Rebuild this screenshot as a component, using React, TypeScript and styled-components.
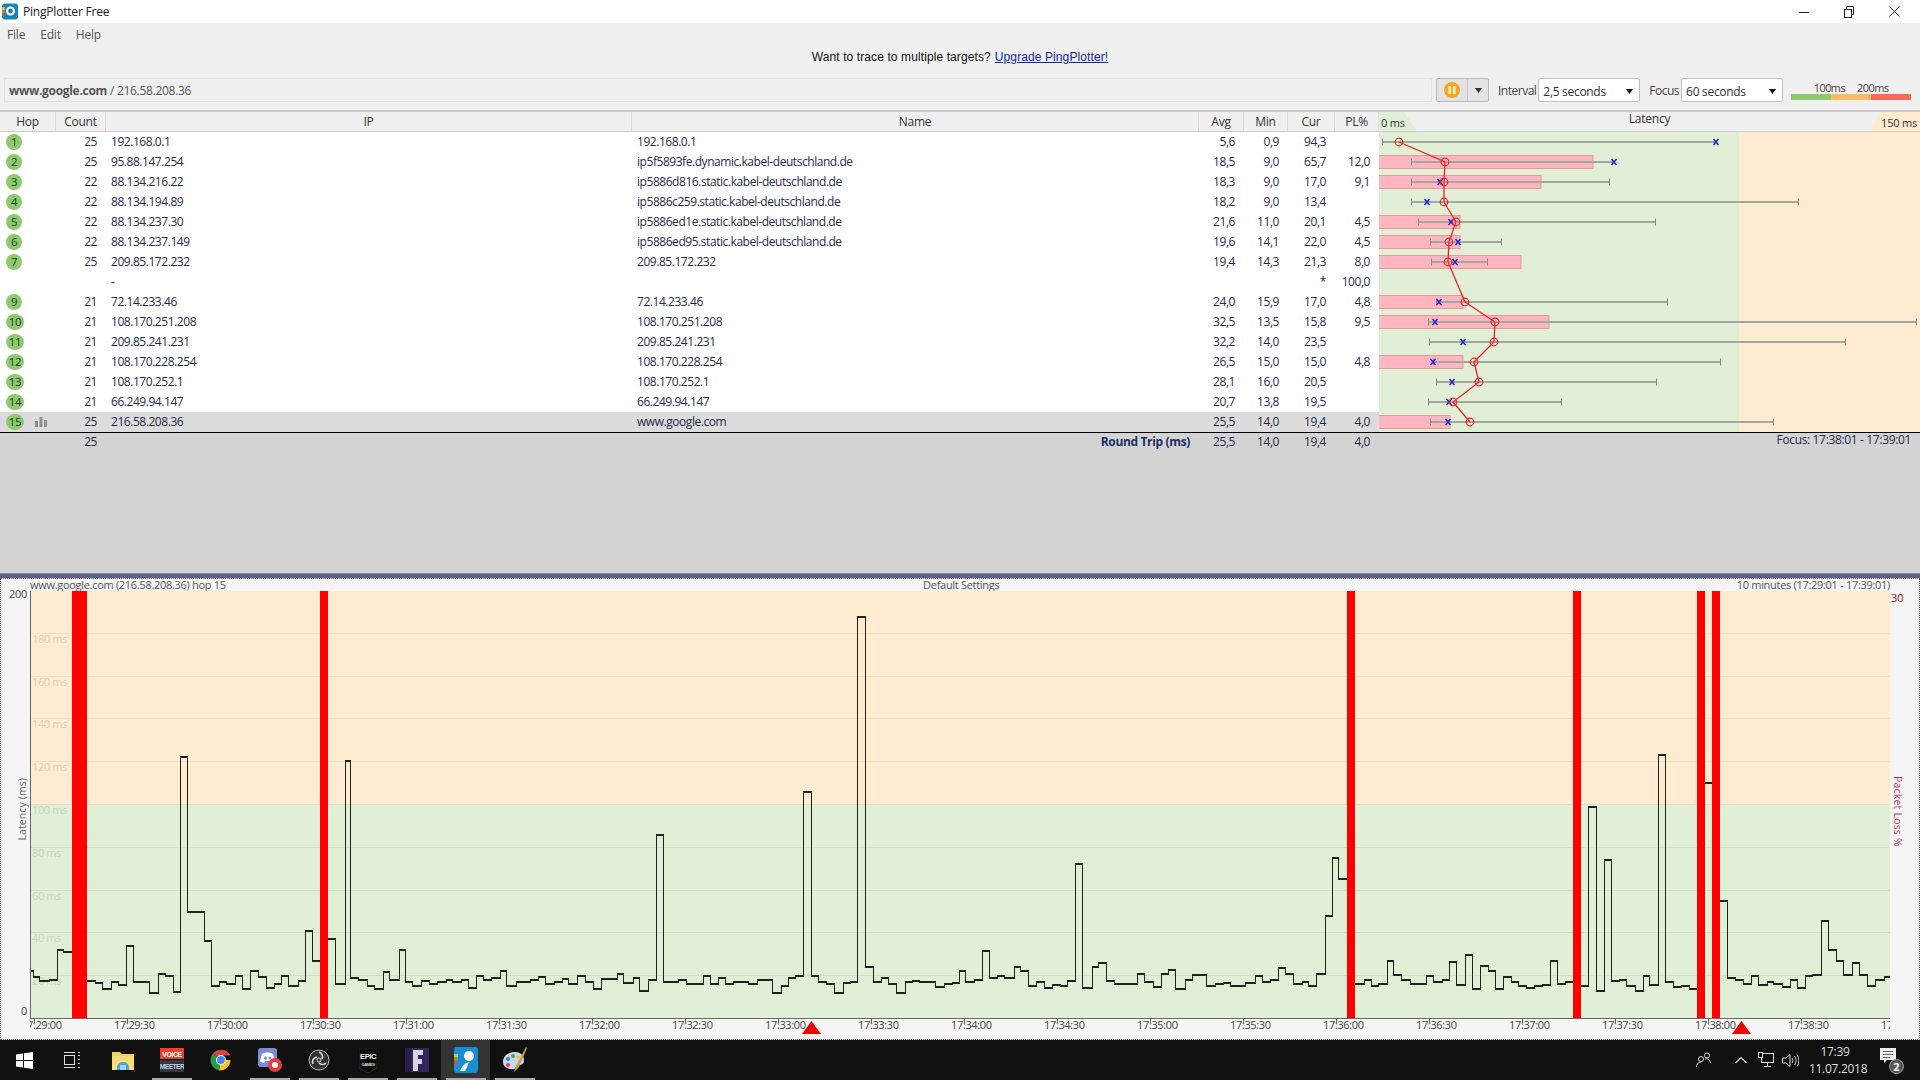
import React from 'react';
import styled, { createGlobalStyle } from 'styled-components';

const Global = createGlobalStyle`
  html, body { margin: 0; padding: 0; background: #fff; overflow: hidden; }
  * { box-sizing: border-box; }
`;

const Shell = styled.div`
  width: 1920px; height: 1080px; display: flex; flex-direction: column;
  font-family: "Open Sans", "Noto Sans", sans-serif; font-size: 12px; letter-spacing: -0.45px;
  color: #1f2a4a; background: #f0f0f0; overflow: hidden;
`;
const TitleBar = styled.div`
  height: 23px; background: #fff; display: flex; align-items: center; padding-left: 1px; color: #222; flex: none;
`;
const AppName = styled.span`margin-left: 4px; font-size: 12px; letter-spacing: -0.2px;`;
const WinButtons = styled.div`margin-left: auto; display: flex; align-items: center; gap: 35px; padding-right: 20px;`;
const MenuBar = styled.div`
  height: 24px; display: flex; align-items: center; gap: 15px; padding: 0 0 2px 7px; color: #555; flex: none; letter-spacing: -0.2px;
`;
const Banner = styled.div`
  height: 20px; flex: none; display: flex; justify-content: center; align-items: center; gap: 4px;
  font-family: "Liberation Sans", Arial, sans-serif; letter-spacing: 0.1px; color: #111;
  a { color: #0a1fb0; text-decoration: underline; }
`;
const ControlBar = styled.div`
  height: 43px; flex: none; display: flex; align-items: center; padding: 3px 0 0 4px;
`;
const AddressBox = styled.div`
  width: 1428px; height: 24px; border: 1px solid #e2e2e2; padding-left: 4px; display: flex; align-items: center; gap: 3px; color: #555; letter-spacing: -0.3px;
  b { font-weight: 700; }
`;
const PauseGroup = styled.div`
  margin-left: 4px; width: 53px; height: 24px; display: flex; border: 1px solid #b8b8b8; border-radius: 2px; background: #e3e3e3;
`;
const PauseHalf = styled.div`
  width: 31px; display: flex; align-items: center; justify-content: center; border-right: 1px solid #c4c4c4;
`;
const ArrowHalf = styled.div`flex: 1; display: flex; align-items: center; justify-content: center;`;
const FieldLabel = styled.span`color: #444; letter-spacing: -0.5px; margin: 0 2px 0 9px;`;
const Select = styled.div`
  width: 102px; height: 24px; background: #fff; border: 1px solid #c0c0c0; border-radius: 2px; display: flex; align-items: center;
  justify-content: space-between; padding: 2px 6px 0 4px; color: #333; letter-spacing: -0.3px;
`;
const Legend = styled.div`margin-left: 8px; width: 120px; display: flex; flex-direction: column; margin-top: 1px;`;
const LegendLabels = styled.div`display: flex; justify-content: center; gap: 12px; font-size: 11px; line-height: 13px; color: #444; letter-spacing: -0.6px;`;
const LegendBar = styled.div`display: flex; height: 6px;`;
const LegendPart = styled.div<{ $c: string }>`flex: 1; background: ${p => p.$c};`;

const HeadWrap = styled.div`
  height: 22px; flex: none; display: flex; border-top: 2px solid #cccccc; border-bottom: 1px solid #cccccc; background: #f0f0f0;
`;
const COLS = '56px 50px 526px 567px 45px 44px 47px 44px';
const HeadGrid = styled.div`display: grid; grid-template-columns: ${COLS}; width: 1379px; flex: none;`;
const HeadCell = styled.div`
  display: flex; align-items: center; justify-content: center; border-right: 1px solid #dcdcdc; color: #333; letter-spacing: -0.25px; padding-bottom: 1px;
`;
const LatencyHead = styled.div`
  flex: 1; position: relative; display: flex; justify-content: space-between; align-items: flex-end; padding: 0 3px 0 2px;
  background: linear-gradient(90deg, #e0efd6 50%, #feebd0 50%); color: #333; font-size: 11px; line-height: 16px; letter-spacing: -0.2px;
  &::before { content: ''; position: absolute; inset: 0; background: #f0f0f0;
    clip-path: polygon(25px 0, calc(100% - 40px) 0, calc(100% - 50px) 100%, 38px 100%); }
`;
const LatencyTitle = styled.span`
  position: absolute; left: 0; right: 0; top: -1px; text-align: center; font-size: 12px; color: #333; letter-spacing: -0.2px;
`;
const HeadEnd = styled.span`position: relative;`;

const TableBody = styled.div`display: flex; flex: none; height: 300px; background: #fff;`;
const RowsCol = styled.div`width: 1379px; flex: none;`;
const Row = styled.div<{ $sel?: boolean }>`
  display: grid; grid-template-columns: ${COLS}; height: 20px; align-items: center; background: ${p => (p.$sel ? '#dcdcdc' : 'transparent')};
`;
const HopCell = styled.div`display: flex; align-items: center; padding-left: 6px; gap: 11px;`;
const Badge = styled.div<{ $wide: boolean }>`
  width: ${p => (p.$wide ? 18 : 16)}px; height: 16px; border-radius: 50%; background: #8ec96f; color: #24402a; display: flex; align-items: center; justify-content: center;
  font-size: 11.5px; line-height: 16px; padding-bottom: 1px;
`;
const Num = styled.div`text-align: right; padding: 0 9px 2px 0;`;
const Txt = styled.div`padding: 0 0 2px 5px; white-space: nowrap;`;
const BoldNum = styled(Num)`font-weight: 700; color: #1b2f63; letter-spacing: -0.35px;`;
const LatencySvg = styled.svg`display: block; width: 541px; height: 300px; flex: none;`;

const Grey = styled.div`
  height: 141px; flex: none; background: #d3d3d3; border-top: 1px solid #000; display: flex; align-items: flex-start;
`;
const SummaryRow = styled(Row)`width: 1379px; height: 14px; flex: none;`;
const FocusText = styled.div`margin-left: auto; padding-right: 9px; line-height: 14px; letter-spacing: -0.35px;`;
const Splitter = styled.div`height: 5px; flex: none; background: #60608a; border-top: 1px solid #8a8aa4;`;

const GraphPanel = styled.div`
  height: 462px; flex: none; background: #f5f5f5; border: 1px dotted #555; border-bottom: 1px dotted #444; display: flex; flex-direction: column;
`;
const GraphTitle = styled.div`
  height: 12px; flex: none; margin: 0 29px; padding-bottom: 2px; display: flex; justify-content: space-between; align-items: center; font-size: 11px; color: #555; letter-spacing: -0.3px;
`;
const GraphMid = styled.span`margin-right: 40px;`;
const GraphBody = styled.div`display: flex; flex: none; height: 447px;`;
const AxisLeft = styled.div`
  width: 29px; height: 427px; flex: none; display: flex; flex-direction: column; justify-content: space-between; align-items: flex-end; padding-right: 3px; color: #444; font-size: 11px; letter-spacing: -0.3px; line-height: 14px;
`;
const TopNum = styled.span`margin-top: -4px;`;
const BottomNum = styled.span`margin-bottom: 0;`;
const VertLabel = styled.span`
  writing-mode: vertical-rl; transform: rotate(180deg); font-size: 10.5px; color: #666; letter-spacing: 0.1px; margin-right: -2px; margin-top: 14px;
`;
const ChartSvg = styled.svg`display: block; width: 1860px; height: 447px; flex: none;`;
const AxisRight = styled.div`
  width: 29px; height: 427px; flex: none; display: flex; flex-direction: column; padding-left: 1px; color: #a01020; font-size: 11px; line-height: 14px; letter-spacing: -0.1px;
`;
const PacketLabel = styled.span`
  align-self: flex-start; writing-mode: vertical-rl; font-size: 10.5px; color: #c03a58; letter-spacing: 0.2px; margin-top: 171px;
`;

const Taskbar = styled.div`height: 40px; flex: none; background: #101010; display: flex; align-items: stretch; color: #eee;`;
const Slot = styled.div<{ $w?: number; $run?: boolean; $active?: boolean }>`
  width: ${p => p.$w ?? 49}px; position: relative; display: flex; align-items: center; justify-content: center;
  background: ${p => (p.$active ? '#333' : 'transparent')};
  ${p => p.$run ? `&::after { content: ''; position: absolute; left: 5px; right: 4px; bottom: 0; height: 2px; background: #a9a9a9; }` : ''}
`;
const Spacer = styled.div`width: 2px;`;
const Tray = styled.div`margin-left: auto; display: flex; align-items: center; padding-right: 17px;`;
const TrayIcon = styled.div<{ $mr: number }>`display: flex; margin-right: ${p => p.$mr}px;`;
const Clock = styled.div`
  width: 52px; margin-right: 19px; text-align: center; font-size: 12px; line-height: 17px; letter-spacing: -0.3px; color: #ddd;
`;
const NotifyWrap = styled.div`position: relative; width: 23px; height: 24px;`;
const NotifyCount = styled.span`
  position: absolute; right: -1px; bottom: -2px; width: 15px; height: 15px; border-radius: 50%; background: #555; border: 1px solid #999; color: #fff;
  font-size: 11px; font-weight: 700; line-height: 13px; text-align: center; letter-spacing: 0;
`;

interface Hop { hop: string; count: string; ip: string; name: string; avg: string; min: string; cur: string; pl: string }
const H = (hop: string, count: string, ip: string, name: string, avg: string, min: string, cur: string, pl: string): Hop => ({ hop, count, ip, name, avg, min, cur, pl });
const hops: Hop[] = [
  H('1', '25', '192.168.0.1', '192.168.0.1', '5,6', '0,9', '94,3', ''),
  H('2', '25', '95.88.147.254', 'ip5f5893fe.dynamic.kabel-deutschland.de', '18,5', '9,0', '65,7', '12,0'),
  H('3', '22', '88.134.216.22', 'ip5886d816.static.kabel-deutschland.de', '18,3', '9,0', '17,0', '9,1'),
  H('4', '22', '88.134.194.89', 'ip5886c259.static.kabel-deutschland.de', '18,2', '9,0', '13,4', ''),
  H('5', '22', '88.134.237.30', 'ip5886ed1e.static.kabel-deutschland.de', '21,6', '11,0', '20,1', '4,5'),
  H('6', '22', '88.134.237.149', 'ip5886ed95.static.kabel-deutschland.de', '19,6', '14,1', '22,0', '4,5'),
  H('7', '25', '209.85.172.232', '209.85.172.232', '19,4', '14,3', '21,3', '8,0'),
  H('', '', '-', '', '', '', '*', '100,0'),
  H('9', '21', '72.14.233.46', '72.14.233.46', '24,0', '15,9', '17,0', '4,8'),
  H('10', '21', '108.170.251.208', '108.170.251.208', '32,5', '13,5', '15,8', '9,5'),
  H('11', '21', '209.85.241.231', '209.85.241.231', '32,2', '14,0', '23,5', ''),
  H('12', '21', '108.170.228.254', '108.170.228.254', '26,5', '15,0', '15,0', '4,8'),
  H('13', '21', '108.170.252.1', '108.170.252.1', '28,1', '16,0', '20,5', ''),
  H('14', '21', '66.249.94.147', '66.249.94.147', '20,7', '13,8', '19,5', ''),
  H('15', '25', '216.58.208.36', 'www.google.com', '25,5', '14,0', '19,4', '4,0'),
];

// row, min, avg, cur, max, bar end (absolute screen x)
const lat: [number, number, number, number, number, number][] = [
  [0, 1382, 1399, 1716, 1716, 0],
  [1, 1411, 1445, 1614, 1614, 1593],
  [2, 1411, 1444, 1440, 1609, 1541],
  [3, 1411, 1444, 1427, 1798, 0],
  [4, 1418, 1456, 1451, 1655, 1460],
  [5, 1430, 1449, 1458, 1501, 1460],
  [6, 1431, 1448, 1455, 1487, 1521],
  [8, 1436, 1465, 1439, 1667, 1463],
  [9, 1428, 1495, 1435, 1916, 1549],
  [10, 1429, 1494, 1463, 1845, 0],
  [11, 1433, 1474, 1433, 1720, 1463],
  [12, 1436, 1479, 1452, 1656, 0],
  [13, 1428, 1453, 1449, 1561, 0],
  [14, 1430, 1470, 1448, 1773, 1450],
];

const LatencyChart = () => {
  const pts = lat.map(r => `${r[2]},${10 + r[0] * 20}`).join(' ');
  return (
    <LatencySvg viewBox="1379 0 541 300">
      <rect x="1379" y="0" width="360" height="300" fill="#e0efd6" />
      <rect x="1739" y="0" width="181" height="300" fill="#feebd0" />
      {lat.map(([i, , , , , bar]) => bar > 0 && (
        <rect key={i} x="1378.5" y={3.5 + i * 20} width={bar - 1378.5} height="13" fill="#ffb6c1" stroke="#e89a90" />
      ))}
      {lat.map(([i, min, , cur, max]) => {
        const y = 10 + i * 20;
        return (
          <g key={i} stroke="#a3a89e">
            <line x1={min} x2={max} y1={y} y2={y} strokeWidth="2" />
            <line x1={min + 0.5} x2={min + 0.5} y1={y - 3.5} y2={y + 3.5} stroke="#8a8a8a" />
            {cur !== max && <line x1={max + 0.5} x2={max + 0.5} y1={y - 3.5} y2={y + 3.5} stroke="#8a8a8a" />}
          </g>
        );
      })}
      <polyline points={pts} fill="none" stroke="#e8262a" strokeWidth="1.3" />
      {lat.map(([i, , , cur]) => {
        const y = 10 + i * 20;
        return <path key={i} d={`M${cur - 2.5} ${y - 3}L${cur + 2.5} ${y + 3}M${cur + 2.5} ${y - 3}L${cur - 2.5} ${y + 3}`} stroke="#2222cc" strokeWidth="1.5" fill="none" />;
      })}
      {lat.map(([i, , avg]) => (
        <circle key={i} cx={avg} cy={10 + i * 20} r="3.8" fill="none" stroke="#e8262a" strokeWidth="1.2" />
      ))}
    </LatencySvg>
  );
};

const seg10 = [[68,815],[73,833],[88,845],[110,842],[127,752],[142,759],[192,845],[212,853],[229,870],[248,848],[264,857],[283,740],[299,849],[333,881],[353,824],[369,830],[387,878],[404,173],[420,638],[456,725],[472,860],[491,848],[507,855],[527,830],[541,870],[561,815],[577,835],[595,866],[614,854],[630,830],[646,860],[667,845],[684,695],[698,785],[732,719],[751,855],[772,185],[785,836],[803,842],[821,860],[838,870],[857,818],[872,843],[893,752],[908,848],[924,860],[944,845],[960,855],[980,848],[998,842],[1013,848],[1032,842],[1048,867],[1067,830],[1081,843],[1100,836],[1120,815],[1134,860],[1155,848],[1188,842],[1206,833],[1221,855],[1241,848],[1258,840],[1273,855],[1292,830],[1310,850],[1328,870],[1347,840],[1381,824],[1396,852],[1417,836],[1432,875],[1451,842],[1468,407],[1484,848]];
const seg11 = [[0,1176],[17,1142],[35,707],[51,1149],[85,1142],[102,1154],[140,1130],[156,1155],[175,1136],[190,1154],[209,1149],[243,1154],[261,1142],[295,1182],[315,1161],[331,1136],[348,1130],[366,578],[382,1130],[398,1149],[416,1154],[434,1182],[454,1151],[471,1148],[487,53],[503,1103],[521,1149],[540,1136],[555,1154],[573,1182],[593,1149],[609,1145],[626,1149],[660,1164],[680,1154],[698,1151],[714,1115],[729,1149],[748,1142],[767,1055],[781,1136],[800,1130],[816,1136],[837,1103],[852,1115],[868,1161],[887,1149],[904,1167],[923,1157],[940,1161],[957,1145],[975,794],[991,1167],[1012,1103],[1027,1092],[1043,1146],[1061,1154],[1114,1124],[1130,1149],[1148,1164],[1168,1124],[1183,1112],[1199,1170],[1220,1142],[1237,1128],[1268,1161],[1289,1155],[1306,1151],[1322,1161]];
const seg12 = [[12,852],[34,830],[50,849],[69,843],[87,808],[104,825],[122,855],[142,849],[156,861],[176,824],[195,650],[213,477],[227,540],[262,855],[285,842],[301,861],[319,855],[338,785],[353,827],[372,842],[391,855],[429,830],[444,849],[465,842],[483,790],[497,858],[518,767],[534,870],[554,800],[571,815],[587,870],[606,835],[624,848],[642,860],[659,866],[679,860],[697,857],[716,785],[730,855],[750,848],[783,860],[803,323],[820,876],[840,482],[856,845],[875,842],[891,860],[910,876],[930,832],[944,857],[965,167],[981,848],[999,865],[1018,860],[1035,870],[1069,252],[1103,605],[1124,836],[1142,842],[1160,855],[1179,830],[1195,858],[1216,848],[1230,856],[1249,864],[1269,842],[1284,868],[1304,830],[1320,827],[1340,667],[1357,752],[1374,785],[1391,828],[1411,793],[1428,828],[1445,860],[1465,843],[1484,833]];

const trace: [number, number][] = [
  ...seg10.map(([p, q]) => [Math.round(p / 2.24), Math.round(700 + q / 3)] as [number, number]).filter(a => a[0] < 640),
  ...seg11.map(([p, q]) => [Math.round(640 + p / 2.24), Math.round(600 + q / 3)] as [number, number]).filter(a => a[0] >= 640),
  ...seg12.map(([p, q]) => [Math.round(1240 + p / 2.306), Math.round(700 + q / 3)] as [number, number]),
];
const END = 1890;
const horiz = trace.map(([x, y], i) => `M${x} ${y}H${i + 1 < trace.length ? trace[i + 1][0] + 1 : END}`).join('');
const vert = trace.slice(1).map(([x, y], i) => `M${x + 0.5} ${trace[i][1]}V${y}`).join('');

const gridYs = [634, 677, 719, 762, 848, 891, 933, 976];
const axisLabels: [string, number][] = [['180 ms', 634], ['160 ms', 677], ['140 ms', 719], ['120 ms', 762], ['100 ms', 805], ['80 ms', 848], ['60 ms', 891], ['40 ms', 933], ['20 ms', 976]];
const redBars: [number, number][] = [[72, 15], [320, 8], [1347, 8], [1573, 8], [1697, 8], [1712, 8]];
const ticks = Array.from({ length: 21 }, (_, k) => {
  const total = 29 * 60 + k * 30;
  const m = Math.floor(total / 60);
  return { x: 34 + 93 * k, label: `17:${m}:${total % 60 === 0 ? '00' : '30'}` };
});

const TraceChart = () => (
  <ChartSvg viewBox="30 592 1860 447">
    <rect x="30" y="592" width="1860" height="213" fill="#feebd0" />
    <rect x="30" y="805" width="1860" height="214" fill="#e0efd6" />
    {gridYs.map(y => (
      <line key={y} x1="30" x2="1890" y1={y + 0.5} y2={y + 0.5} stroke={y < 805 ? '#f1e0c6' : '#d0e0c6'} />
    ))}
    <line x1="30" x2="1890" y1="805.5" y2="805.5" stroke="#e6dfc8" />
    {axisLabels.map(([t, y]) => (
      <text key={t} x="32" y={y + 10} fontSize="11" letterSpacing="-0.4" fontFamily="Open Sans" fill={y < 805 ? '#dccfb7' : '#c7d5bc'}>{t}</text>
    ))}
    <path d={horiz} stroke="#1b231a" strokeWidth="2" fill="none" />
    <path d={vert} stroke="#1b231a" strokeWidth="1" fill="none" />
    {redBars.map(([x, w]) => <rect key={x} x={x} y="592" width={w} height="427" fill="#ff0000" />)}
    <line x1="30" x2="1890" y1="1019.5" y2="1019.5" stroke="#666" />
    <line x1="30.5" x2="30.5" y1="592" y2="1020" stroke="#666" />
    {ticks.map(t => (
      <g key={t.x}>
        <line x1={t.x + 0.5} x2={t.x + 0.5} y1="1019" y2="1024" stroke="#666" />
        <text x={t.x - 13} y="1030" fontSize="11" letterSpacing="-0.35" fontFamily="Open Sans" fill="#444">{t.label}</text>
      </g>
    ))}
    <polygon points="802,1035 821,1035 811.5,1022" fill="#ee0000" />
    <polygon points="1732,1035 1751,1035 1741.5,1022" fill="#ee0000" />
  </ChartSvg>
);

const Caret = ({ c = '#333' }: { c?: string }) => (
  <svg width="7" height="5" viewBox="0 0 7 5"><polygon points="0,0 7,0 3.5,5" fill={c} /></svg>
);

const AppLogo = () => (
  <svg width="18" height="17" viewBox="0 0 18 17">
    <rect x="1" y="0.5" width="16" height="16" rx="3" fill="#1582c4" />
    <rect x="1" y="4" width="3" height="3" fill="#f0b030" />
    <rect x="1" y="7" width="3" height="3" fill="#5fb04a" />
    <rect x="1" y="10" width="3" height="3" fill="#e0483c" />
    <circle cx="9.5" cy="8" r="4.5" fill="#fff" />
    <circle cx="9.5" cy="8" r="2.4" fill="#1582c4" />
  </svg>
);

const TaskIcons = {
  Win: () => (
    <svg width="17" height="17" viewBox="0 0 17 17"><path d="M0 2.5 7 1.4V8H0zM8 1.2 17 0V8H8zM0 9H7V15.6L0 14.5zM8 9H17V17L8 15.8z" fill="#fff" /></svg>
  ),
  View: () => (
    <svg width="16" height="16" viewBox="0 0 16 16" fill="none" stroke="#ddd"><path d="M0 .5H11M0 15.5H11" /><rect x=".5" y="3.5" width="10" height="9" /><path d="M14 .5h2M14 3.5h2M14 7.5h2M14 11.5h2M14 15.5h2" /></svg>
  ),
  Folder: () => (
    <svg width="22" height="20" viewBox="0 0 22 20"><path d="M0 2h8l2 2h12v16H0z" fill="#f6cf62" /><path d="M0 6h22v14H0z" fill="#fbdc7d" /><path d="M5 17a6 5 0 0 1 12 0v3H5z" fill="#4aa6d8" /><rect x="8" y="15" width="6" height="5" fill="#9ed2ee" /></svg>
  ),
  Voice: () => (
    <svg width="24" height="24" viewBox="0 0 24 24">
      <rect y="0" width="24" height="11" fill="#e8432e" /><rect y="12" width="24" height="12" fill="#2e3a4c" />
      <text x="12" y="8.5" textAnchor="middle" fontSize="7" fontWeight="700" fontFamily="Liberation Sans" fill="#fff">VOICE</text>
      <text x="12" y="20.5" textAnchor="middle" fontSize="6.5" fontWeight="700" fontFamily="Liberation Sans" fill="#c8d0d8">MEETER</text>
    </svg>
  ),
  Chrome: () => (
    <svg width="22" height="22" viewBox="0 0 22 22">
      <path d="M11 11 3 4.5A10.5 10.5 0 0 1 20.5 6.5H11z" fill="#dd4437" />
      <path d="M11 11h9.5A10.5 10.5 0 0 1 9 21.4z" fill="#f8c51c" />
      <path d="M11 11 9 21.4A10.5 10.5 0 0 1 3 4.5z" fill="#2a9a47" />
      <circle cx="11" cy="11" r="5" fill="#fff" /><circle cx="11" cy="11" r="3.9" fill="#4286f4" />
    </svg>
  ),
  Discord: () => (
    <svg width="24" height="24" viewBox="0 0 24 24">
      <rect x="0" y="0" width="19" height="19" rx="3" fill="#7a8cd8" />
      <path d="M4 6c3-2 8-2 11 0l2 7c-2 1.6-3 2-4 2l-1-2H7l-1 2c-1 0-2-.4-4-2z" fill="#fff" />
      <circle cx="7.5" cy="10" r="1.5" fill="#7a8cd8" /><circle cx="12" cy="10" r="1.5" fill="#7a8cd8" />
      <circle cx="17" cy="17" r="7" fill="#e83a44" /><circle cx="17" cy="17" r="3" fill="#fff" />
    </svg>
  ),
  Obs: () => (
    <svg width="22" height="22" viewBox="0 0 22 22" fill="none">
      <circle cx="11" cy="11" r="10" fill="#333" stroke="#bbb" strokeWidth="1" />
      <path d="M11 3a5 5 0 0 1 3 7M18 14a5 5 0 0 1-7 0M5 15a5 5 0 0 1 4-7" stroke="#ddd" strokeWidth="1.6" />
      <circle cx="11" cy="11" r="2" stroke="#ddd" />
    </svg>
  ),
  Epic: () => (
    <svg width="18" height="25" viewBox="0 0 18 25">
      <path d="M0 0H18V20L9 25 0 20z" fill="#0a0a0a" stroke="#2a2a2a" />
      <text x="9" y="11" textAnchor="middle" fontSize="7.5" fontWeight="700" fontFamily="Liberation Sans" fill="#eee" letterSpacing="-0.4">EPIC</text>
      <text x="9" y="18" textAnchor="middle" fontSize="4.2" fontWeight="700" fontFamily="Liberation Sans" fill="#ddd">GAMES</text>
    </svg>
  ),
  Fort: () => (
    <svg width="24" height="24" viewBox="0 0 24 24">
      <rect width="24" height="24" fill="#35245c" /><path d="M0 0h6v24H0z" fill="#2a1c4a" /><path d="M8 2h10v5h-5v4h4v5h-4v7H8z" fill="#d8d4e4" />
    </svg>
  ),
  Pp: () => (
    <svg width="24" height="26" viewBox="0 0 24 26">
      <rect width="24" height="26" rx="3" fill="#1590d8" />
      <rect y="7" width="4" height="3.5" fill="#f0b030" /><rect y="10.5" width="4" height="3.5" fill="#5fb04a" /><rect y="14" width="4" height="3.5" fill="#e0483c" />
      <circle cx="15" cy="9" r="5" fill="#fff" /><path d="M6 24c2-5 5-8 9-9l-2 5-2 4z" fill="#fff" />
    </svg>
  ),
  Paint: () => (
    <svg width="24" height="26" viewBox="0 0 24 26">
      <path d="M12 5C5 5 0 9 0 15c0 6 7 8 11 7 3-1 1-4 4-4 4 0 6-1 6-5 0-5-4-8-9-8z" fill="#c8d8e8" />
      <circle cx="5" cy="12" r="2" fill="#3a7ad0" /><circle cx="10" cy="9" r="2" fill="#40a850" /><circle cx="5" cy="18" r="2" fill="#e04040" /><circle cx="15" cy="10" r="1.6" fill="#f0c030" />
      <path d="M23 0 13 19l-2 6 5-5L24 1z" fill="#d89a40" />
    </svg>
  ),
};

export default function App() {
  return (
    <Shell>
      <Global />
      <TitleBar>
        <AppLogo />
        <AppName>PingPlotter Free</AppName>
        <WinButtons>
          <svg width="10" height="10" viewBox="0 0 10 10"><path d="M0 5.5H10" stroke="#222" /></svg>
          <svg width="10" height="12" viewBox="0 0 10 12" fill="none" stroke="#222"><rect x=".5" y="3.5" width="7" height="8" /><path d="M2.5 3.5V.5H9.5V8.5H7.5" /></svg>
          <svg width="11" height="11" viewBox="0 0 11 11"><path d="M.5.5 10.5 10.5M10.5.5 .5 10.5" stroke="#222" /></svg>
        </WinButtons>
      </TitleBar>
      <MenuBar><span>File</span><span>Edit</span><span>Help</span></MenuBar>
      <Banner>Want to trace to multiple targets? <a href="#upgrade">Upgrade PingPlotter!</a></Banner>
      <ControlBar>
        <AddressBox><b>www.google.com</b><span>/ 216.58.208.36</span></AddressBox>
        <PauseGroup>
          <PauseHalf>
            <svg width="16" height="16" viewBox="0 0 16 16"><circle cx="8" cy="8" r="8" fill="#f7a623" /><rect x="4.5" y="4" width="2.6" height="8" fill="#fdeec4" /><rect x="8.9" y="4" width="2.6" height="8" fill="#fdeec4" /></svg>
          </PauseHalf>
          <ArrowHalf><Caret /></ArrowHalf>
        </PauseGroup>
        <FieldLabel>Interval</FieldLabel>
        <Select>2,5 seconds<Caret c="#111" /></Select>
        <FieldLabel>Focus</FieldLabel>
        <Select>60 seconds<Caret c="#111" /></Select>
        <Legend>
          <LegendLabels><span>100ms</span><span>200ms</span></LegendLabels>
          <LegendBar><LegendPart $c="#8fc86f" /><LegendPart $c="#fdbb5f" /><LegendPart $c="#f96a5a" /></LegendBar>
        </Legend>
      </ControlBar>
      <HeadWrap>
        <HeadGrid>
          {['Hop', 'Count', 'IP', 'Name', 'Avg', 'Min', 'Cur', 'PL%'].map(h => <HeadCell key={h}>{h}</HeadCell>)}
        </HeadGrid>
        <LatencyHead>
          <HeadEnd>0 ms</HeadEnd>
          <LatencyTitle>Latency</LatencyTitle>
          <HeadEnd>150 ms</HeadEnd>
        </LatencyHead>
      </HeadWrap>
      <TableBody>
        <RowsCol>
          {hops.map(r => (
            <Row key={r.ip + r.hop} $sel={r.hop === '15'}>
              <HopCell>
                {r.hop && <Badge $wide={r.hop.length > 1}>{r.hop}</Badge>}
                {r.hop === '15' && (
                  <svg width="12" height="10" viewBox="0 0 12 10"><path d="M0 4h3v6H0zM4.500 0h3v10h-3zM9 3h3v7H9z" fill="#8d8d8d" /></svg>
                )}
              </HopCell>
              <Num>{r.count}</Num>
              <Txt>{r.ip}</Txt>
              <Txt>{r.name}</Txt>
              <Num>{r.avg}</Num>
              <Num>{r.min}</Num>
              <Num>{r.cur}</Num>
              <Num>{r.pl}</Num>
            </Row>
          ))}
        </RowsCol>
        <LatencyChart />
      </TableBody>
      <Grey>
        <SummaryRow>
          <span />
          <Num>25</Num>
          <span />
          <BoldNum>Round Trip (ms)</BoldNum>
          <Num>25,5</Num>
          <Num>14,0</Num>
          <Num>19,4</Num>
          <Num>4,0</Num>
        </SummaryRow>
        <FocusText>Focus: 17:38:01 - 17:39:01</FocusText>
      </Grey>
      <Splitter />
      <GraphPanel>
        <GraphTitle>
          <span>www.google.com (216.58.208.36) hop 15</span>
          <GraphMid>Default Settings</GraphMid>
          <span>10 minutes (17:29:01 - 17:39:01)</span>
        </GraphTitle>
        <GraphBody>
          <AxisLeft>
            <TopNum>200</TopNum>
            <VertLabel>Latency (ms)</VertLabel>
            <BottomNum>0</BottomNum>
          </AxisLeft>
          <TraceChart />
          <AxisRight>
            <span>30</span>
            <PacketLabel>Packet Loss %</PacketLabel>
          </AxisRight>
        </GraphBody>
      </GraphPanel>
      <Taskbar>
        <Slot $w={48}><TaskIcons.Win /></Slot>
        <Slot $w={48}><TaskIcons.View /></Slot>
        <Spacer />
        <Slot><TaskIcons.Folder /></Slot>
        <Slot $run><TaskIcons.Voice /></Slot>
        <Slot><TaskIcons.Chrome /></Slot>
        <Slot $run><TaskIcons.Discord /></Slot>
        <Slot $run><TaskIcons.Obs /></Slot>
        <Slot $run><TaskIcons.Epic /></Slot>
        <Slot $run><TaskIcons.Fort /></Slot>
        <Slot $run $active><TaskIcons.Pp /></Slot>
        <Slot $run><TaskIcons.Paint /></Slot>
        <Tray>
          <TrayIcon $mr={24}>
            <svg width="15" height="16" viewBox="0 0 15 16" fill="none" stroke="#ddd"><circle cx="11" cy="3.500" r="2.500" /><circle cx="5" cy="7" r="2.500" /><path d="M.5 15c0-3 2-5 4.500-5M9 7c2-.5 5 0 5.500 4" /></svg>
          </TrayIcon>
          <TrayIcon $mr={11}>
            <svg width="12" height="8" viewBox="0 0 12 8" fill="none" stroke="#ddd" strokeWidth="1.2"><path d="M.5 7 6 1.500 11.500 7" /></svg>
          </TrayIcon>
          <TrayIcon $mr={8}>
            <svg width="16" height="16" viewBox="0 0 16 16" fill="none" stroke="#ddd"><rect x="3.500" y="1.500" width="12" height="9" /><rect x=".5" y=".5" width="4" height="5" fill="#101010" /><path d="M9.500 11v3M6 14.500h7" /></svg>
          </TrayIcon>
          <TrayIcon $mr={10}>
            <svg width="17" height="15" viewBox="0 0 17 15" fill="none" stroke="#ddd"><path d="M.5 5H4L8 1.500V13.500L4 10H.5z" /><path d="M10 5c1 1.500 1 3.500 0 5M12.500 3c2 3 2 6 0 9M15 1.500c2.500 4 2.500 8 0 12" /></svg>
          </TrayIcon>
          <Clock>17:39<br />11.07.2018</Clock>
          <NotifyWrap>
            <svg width="16" height="16" viewBox="0 0 16 16"><path d="M0 0H16V12H7L4 15V12H0z" fill="#eee" /><path d="M3 3.500H13M3 6.500H13M3 9.500H10" stroke="#666" /></svg>
            <NotifyCount>2</NotifyCount>
          </NotifyWrap>
        </Tray>
      </Taskbar>
    </Shell>
  );
}
